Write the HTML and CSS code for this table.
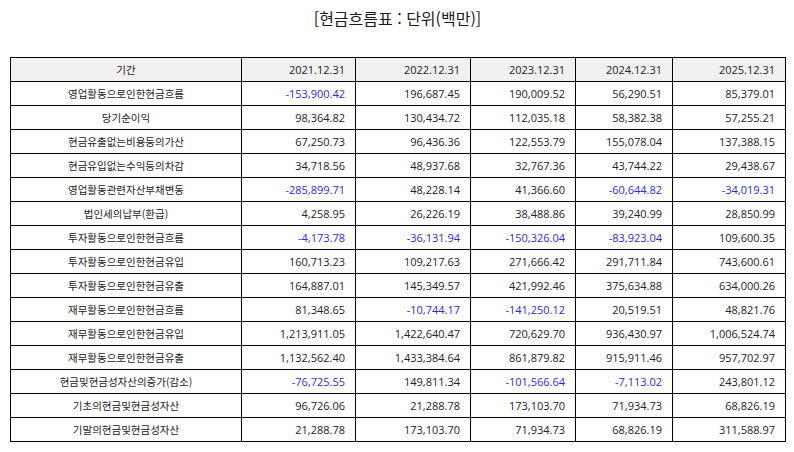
FILE: index.html
```html
<!DOCTYPE html>
<html lang="ko">
<head>
<meta charset="utf-8">
<title>현금흐름표</title>
<link rel="stylesheet" href="styles.css">
</head>
<body>
<div class="page">
  <h1 class="title">[현금흐름표 : 단위(백만)]</h1>
  <table class="grid">
    <colgroup>
      <col class="c-label"><col class="c-a"><col class="c-b"><col class="c-c"><col class="c-d"><col class="c-e">
    </colgroup>
    <thead>
      <tr><th class="label">기간</th><th>2021.12.31</th><th>2022.12.31</th><th>2023.12.31</th><th>2024.12.31</th><th>2025.12.31</th></tr>
    </thead>
    <tbody>
      <tr><td class="label">영업활동으로인한현금흐름</td><td class="neg">-153,900.42</td><td>196,687.45</td><td>190,009.52</td><td>56,290.51</td><td>85,379.01</td></tr>
      <tr><td class="label">당기순이익</td><td>98,364.82</td><td>130,434.72</td><td>112,035.18</td><td>58,382.38</td><td>57,255.21</td></tr>
      <tr><td class="label">현금유출없는비용등의가산</td><td>67,250.73</td><td>96,436.36</td><td>122,553.79</td><td>155,078.04</td><td>137,388.15</td></tr>
      <tr><td class="label">현금유입없는수익등의차감</td><td>34,718.56</td><td>48,937.68</td><td>32,767.36</td><td>43,744.22</td><td>29,438.67</td></tr>
      <tr><td class="label">영업활동관련자산부채변동</td><td class="neg">-285,899.71</td><td>48,228.14</td><td>41,366.60</td><td class="neg">-60,644.82</td><td class="neg">-34,019.31</td></tr>
      <tr><td class="label">법인세의납부(환급)</td><td>4,258.95</td><td>26,226.19</td><td>38,488.86</td><td>39,240.99</td><td>28,850.99</td></tr>
      <tr><td class="label">투자활동으로인한현금흐름</td><td class="neg">-4,173.78</td><td class="neg">-36,131.94</td><td class="neg">-150,326.04</td><td class="neg">-83,923.04</td><td>109,600.35</td></tr>
      <tr><td class="label">투자활동으로인한현금유입</td><td>160,713.23</td><td>109,217.63</td><td>271,666.42</td><td>291,711.84</td><td>743,600.61</td></tr>
      <tr><td class="label">투자활동으로인한현금유출</td><td>164,887.01</td><td>145,349.57</td><td>421,992.46</td><td>375,634.88</td><td>634,000.26</td></tr>
      <tr><td class="label">재무활동으로인한현금흐름</td><td>81,348.65</td><td class="neg">-10,744.17</td><td class="neg">-141,250.12</td><td>20,519.51</td><td>48,821.76</td></tr>
      <tr><td class="label">재무활동으로인한현금유입</td><td>1,213,911.05</td><td>1,422,640.47</td><td>720,629.70</td><td>936,430.97</td><td>1,006,524.74</td></tr>
      <tr><td class="label">재무활동으로인한현금유출</td><td>1,132,562.40</td><td>1,433,384.64</td><td>861,879.82</td><td>915,911.46</td><td>957,702.97</td></tr>
      <tr><td class="label">현금및현금성자산의증가(감소)</td><td class="neg">-76,725.55</td><td>149,811.34</td><td class="neg">-101,566.64</td><td class="neg">-7,113.02</td><td>243,801.12</td></tr>
      <tr><td class="label">기초의현금및현금성자산</td><td>96,726.06</td><td>21,288.78</td><td>173,103.70</td><td>71,934.73</td><td>68,826.19</td></tr>
      <tr><td class="label">기말의현금및현금성자산</td><td>21,288.78</td><td>173,103.70</td><td>71,934.73</td><td>68,826.19</td><td>311,588.97</td></tr>
    </tbody>
  </table>
</div>
</body>
</html>
```

FILE: styles.css
```css
html, body {
  margin: 0;
  padding: 0;
  background: #ffffff;
}

body {
  font-family: "Open Sans", "Noto Sans CJK KR", sans-serif;
  color: #222222;
}

.page {
  padding: 8px 0 0 10px;
}

.title {
  margin: 0 0 29px 0;
  width: 775px;
  text-align: center;
  font-family: "Noto Sans CJK KR", "Open Sans", sans-serif;
  font-weight: normal;
  font-size: 16px;
  line-height: 20px;
  color: #1a1a1a;
}

.grid {
  border-collapse: collapse;
  table-layout: fixed;
  width: 775px;
  font-size: 11px;
}

.c-label { width: 231px; }
.c-a { width: 114px; }
.c-b { width: 115px; }
.c-c { width: 105px; }
.c-d { width: 97px; }
.c-e { width: 113px; }

.grid th,
.grid td {
  border: 1px solid #000000;
  height: 23px;
  padding: 0 10px 0 4px;
  text-align: right;
  font-weight: normal;
  white-space: nowrap;
  vertical-align: middle;
}

.grid thead th {
  background: #f0f0f0;
}

.grid .label {
  text-align: center;
  padding: 0 4px;
  font-family: "Noto Sans CJK KR", "Open Sans", sans-serif;
  font-size: 10.5px;
}

.grid .neg {
  color: #2b2bd9;
}
```
